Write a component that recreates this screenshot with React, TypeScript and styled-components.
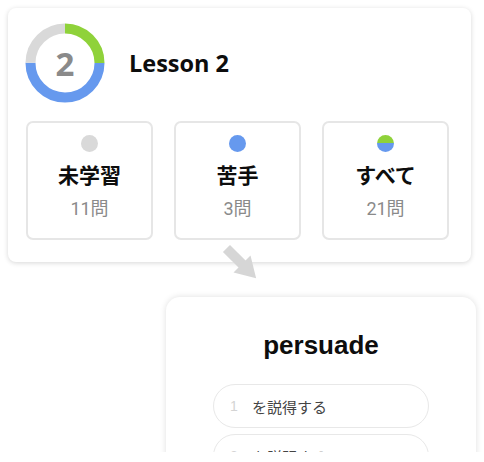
import styled, { createGlobalStyle } from "styled-components";

const GlobalStyle = createGlobalStyle`
  * { box-sizing: border-box; }
  body {
    margin: 0;
    background: #ffffff;
    font-family: "Open Sans", "Noto Sans CJK JP", sans-serif;
  }
`;

const Page = styled.div`
  position: relative;
  width: 484px;
  height: 452px;
  overflow: hidden;
  background: #ffffff;
`;

const LessonCard = styled.section`
  margin: 8px 0 0 8px;
  width: 463px;
  height: 254px;
  padding: 15px 0 0 17px;
  background: #fff;
  border-radius: 8px;
  box-shadow: 0 1px 5px rgba(0, 0, 0, 0.16);
`;

const Header = styled.header`
  display: flex;
  align-items: center;
`;

const DonutWrap = styled.div`
  position: relative;
  width: 80px;
  height: 80px;
  flex-shrink: 0;
`;

const DonutNumber = styled.span`
  position: absolute;
  inset: 0;
  display: flex;
  align-items: center;
  justify-content: center;
  font-family: "Open Sans", sans-serif;
  font-weight: 700;
  font-size: 33px;
  color: #8a8a8a;
`;

const Title = styled.h1`
  margin: 0 0 0 24px;
  font-family: "Open Sans", sans-serif;
  font-weight: 700;
  font-size: 23.5px;
  color: #0d0d0d;
`;

const Tiles = styled.div`
  display: grid;
  grid-template-columns: repeat(3, 127px);
  gap: 21px;
  margin: 18px 0 0 1px;
`;

const Tile = styled.div`
  height: 119px;
  border: 2px solid #e6e6e6;
  border-radius: 7px;
  display: flex;
  flex-direction: column;
  align-items: center;
  padding-top: 12px;
`;

const Dot = styled.span<{ $fill: string }>`
  width: 17px;
  height: 17px;
  border-radius: 50%;
  background: ${(p) => p.$fill};
`;

const TileLabel = styled.div`
  margin-top: 7px;
  font-family: "Noto Sans CJK JP", sans-serif;
  font-weight: 700;
  font-size: 21px;
  line-height: 30px;
  color: #0d0d0d;
`;

const TileCount = styled.div`
  margin-top: 7px;
  font-family: Roboto, "Noto Sans CJK JP", sans-serif;
  font-size: 18px;
  line-height: 26px;
  color: #8a8a8a;
`;

const Arrow = styled.svg`
  position: absolute;
  left: 222px;
  top: 244px;
`;

const QuizCard = styled.section`
  margin: 35px 0 0 166px;
  width: 310px;
  height: 240px;
  padding-top: 28px;
  background: #fff;
  border-radius: 14px;
  box-shadow: 0 0 6px rgba(0, 0, 0, 0.13);
`;

const Word = styled.h2`
  margin: 0;
  text-align: center;
  font-family: "Liberation Sans", Arial, sans-serif;
  font-weight: 700;
  font-size: 26px;
  line-height: 40px;
  color: #0d0d0d;
`;

const Options = styled.ol`
  list-style: none;
  margin: 19px auto 0;
  padding: 0;
  width: 216px;
  display: flex;
  flex-direction: column;
  gap: 6px;
`;

const Option = styled.li`
  height: 44px;
  border: 1.5px solid #e8e8e8;
  border-radius: 22px;
  display: flex;
  align-items: center;
  padding-left: 16px;
`;

const OptionNo = styled.span`
  width: 22px;
  font-family: "Liberation Sans", Arial, sans-serif;
  font-size: 14px;
  color: #d4d4d4;
`;

const OptionText = styled.span`
  font-family: "Noto Sans CJK JP", sans-serif;
  font-size: 15px;
  color: #444;
`;

const tiles = [
  { label: "未学習", count: "11問", fill: "#d9d9d9" },
  { label: "苦手", count: "3問", fill: "#6699ee" },
  {
    label: "すべて",
    count: "21問",
    fill: "linear-gradient(to bottom, #8fd23a 50%, #6699ee 50%)",
  },
];

const options = ["を説得する", "を説明する"];

function Donut() {
  const r = 34.5;
  const c = 2 * Math.PI * r;
  const seg = (from: number, len: number, color: string) => (
    <circle
      cx="40"
      cy="40"
      r={r}
      fill="none"
      stroke={color}
      strokeWidth="10"
      strokeDasharray={`${c * len} ${c}`}
      strokeDashoffset={-c * from}
      transform="rotate(-90 40 40)"
    />
  );
  return (
    <DonutWrap>
      <svg width="80" height="80" viewBox="0 0 80 80">
        {seg(0, 0.25, "#8fd23a")}
        {seg(0.25, 0.5, "#6699ee")}
        {seg(0.75, 0.25, "#d9d9d9")}
      </svg>
      <DonutNumber>2</DonutNumber>
    </DonutWrap>
  );
}

export default function App() {
  return (
    <Page>
      <GlobalStyle />
      <LessonCard>
        <Header>
          <Donut />
          <Title>Lesson 2</Title>
        </Header>
        <Tiles>
          {tiles.map((t) => (
            <Tile key={t.label}>
              <Dot $fill={t.fill} />
              <TileLabel>{t.label}</TileLabel>
              <TileCount>{t.count}</TileCount>
            </Tile>
          ))}
        </Tiles>
      </LessonCard>
      <Arrow width="40" height="40" viewBox="0 0 40 40">
        <g transform="rotate(45 20 20)">
          <rect x="-2" y="15" width="26" height="10" fill="#d6d6d6" />
          <polygon points="20,8 40,20 20,32" fill="#d6d6d6" />
        </g>
      </Arrow>
      <QuizCard>
        <Word>persuade</Word>
        <Options>
          {options.map((o, i) => (
            <Option key={o}>
              <OptionNo>{i + 1}</OptionNo>
              <OptionText>{o}</OptionText>
            </Option>
          ))}
        </Options>
      </QuizCard>
    </Page>
  );
}
